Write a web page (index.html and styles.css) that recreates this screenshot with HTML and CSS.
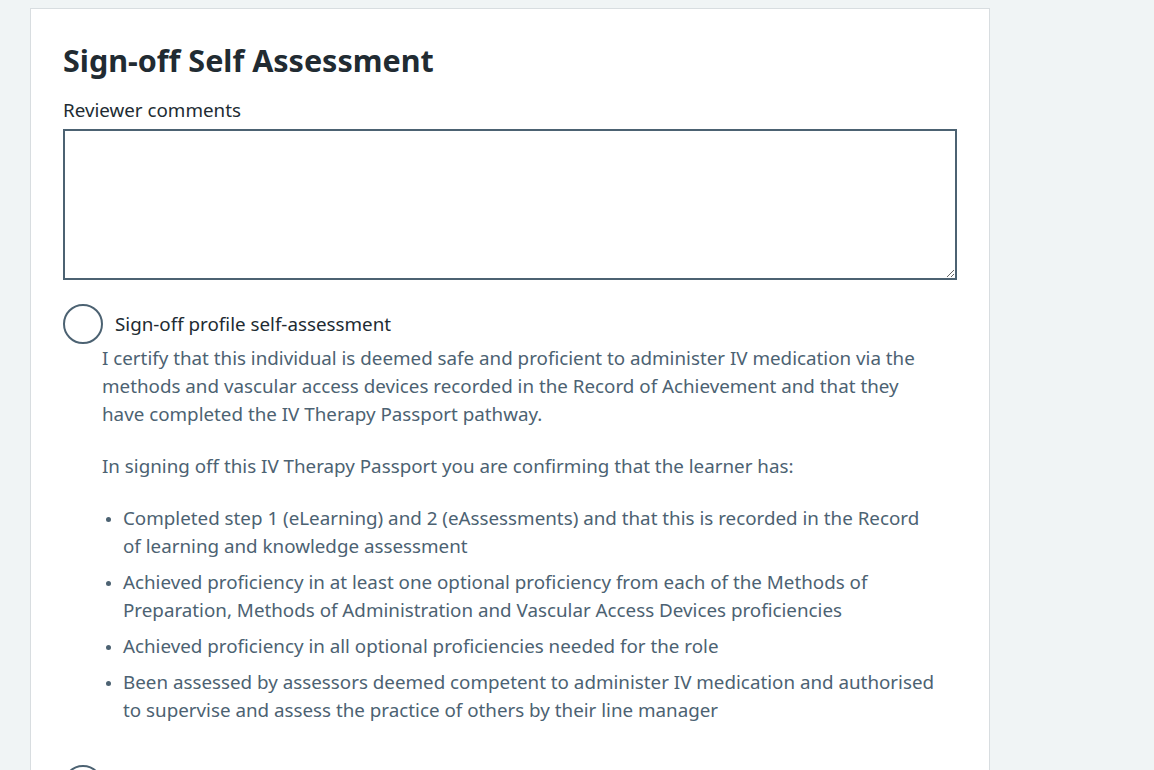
FILE: index.html
```html
<!DOCTYPE html>
<html lang="en">
<head>
<meta charset="utf-8">
<title>Sign-off Self Assessment</title>
<link rel="stylesheet" href="styles.css">
</head>
<body>
<div class="page">
  <main class="card">
    <h1 class="heading">Sign-off Self Assessment</h1>
    <label class="label" for="comments">Reviewer comments</label>
    <textarea id="comments" class="textarea" rows="5"></textarea>
    <div class="radios">
      <div class="radio-item">
        <div class="radio-row">
          <span class="radio-circle"></span>
          <span class="radio-label">Sign-off profile self-assessment</span>
        </div>
        <div class="hint">
          <p>I certify that this individual is deemed safe and proficient to administer IV medication via the methods and vascular access devices recorded in the Record of Achievement and that they have completed the IV Therapy Passport pathway.</p>
          <p>In signing off this IV Therapy Passport you are confirming that the learner has:</p>
          <ul class="list">
            <li>Completed step 1 (eLearning) and 2 (eAssessments) and that this is recorded in the Record of learning and knowledge assessment</li>
            <li>Achieved proficiency in at least one optional proficiency from each of the Methods of Preparation, Methods of Administration and Vascular Access Devices proficiencies</li>
            <li>Achieved proficiency in all optional proficiencies needed for the role</li>
            <li>Been assessed by assessors deemed competent to administer IV medication and authorised to supervise and assess the practice of others by their line manager</li>
          </ul>
        </div>
      </div>
      <div class="radio-item">
        <div class="radio-row">
          <span class="radio-circle"></span>
          <span class="radio-label">Do not sign-off profile self-assessment</span>
        </div>
      </div>
    </div>
  </main>
</div>
</body>
</html>
```

FILE: styles.css
```css
html, body {
  margin: 0;
  padding: 0;
}
body {
  background: #f0f4f5;
  font-family: "Noto Sans", "Open Sans", sans-serif;
  color: #212b32;
}
.page {
  padding: 8px 0 0 30px;
}
.card {
  width: 960px;
  box-sizing: border-box;
  background: #ffffff;
  border: 1px solid #d8dde0;
  border-bottom: none;
  padding: 31px 32px 40px 32px;
}
.heading {
  margin: 0 0 16px;
  font-size: 30.5px;
  line-height: 40px;
  font-weight: 700;
  color: #212b32;
}
.label {
  display: block;
  font-size: 18.8px;
  line-height: 28px;
  margin-bottom: 5px;
}
.textarea {
  display: block;
  width: 894px;
  height: 151px;
  box-sizing: border-box;
  border: 2px solid #4c6272;
  border-radius: 0;
  margin: 0;
  resize: vertical;
  font-family: inherit;
}
.radios {
  margin-top: 24px;
}
.radio-item {
  margin-bottom: 41px;
}
.radio-row {
  display: flex;
  align-items: center;
  gap: 12px;
  height: 40px;
}
.radio-circle {
  width: 40px;
  height: 40px;
  box-sizing: border-box;
  border: 2px solid #4c6272;
  border-radius: 50%;
  flex: none;
}
.radio-label {
  font-size: 18.8px;
  line-height: 30px;
  color: #212b32;
}
.hint {
  padding-left: 39px;
  padding-right: 16px;
  color: #4c6272;
  font-size: 18.8px;
  line-height: 28px;
}
.hint p {
  margin: 0 0 24px;
}
.list {
  margin: 0;
  padding-left: 21px;
  list-style: disc;
}
.list li {
  margin-bottom: 8px;
}
.list li::marker {
  font-size: 14px;
}
```
